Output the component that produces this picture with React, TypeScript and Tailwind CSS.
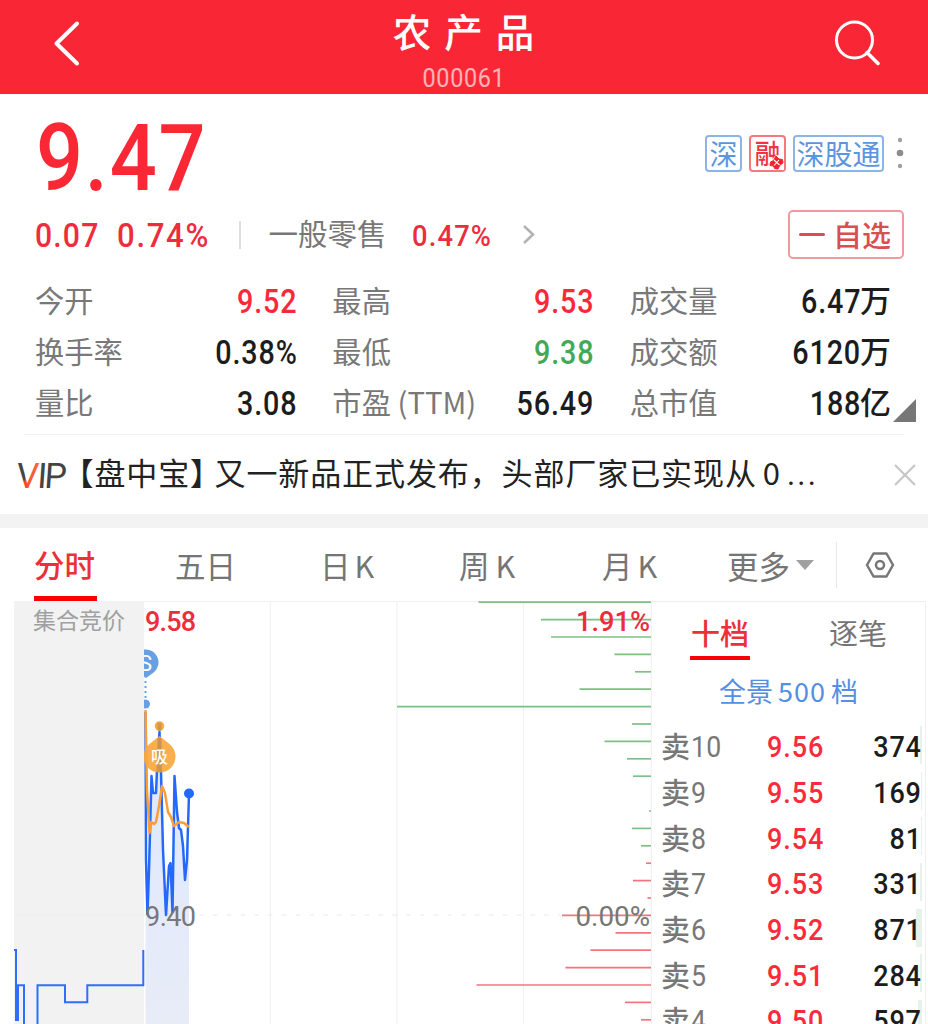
import { clsx } from "clsx";

const stats = [
  { label: "今开", value: "9.52", color: "text-[#fa2838]" },
  { label: "最高", value: "9.53", color: "text-[#fa2838]" },
  { label: "成交量", value: "6.47", unit: "万", color: "text-[#1c1c1c]" },
  { label: "换手率", value: "0.38%", color: "text-[#1c1c1c]" },
  { label: "最低", value: "9.38", color: "text-[#43a957]" },
  { label: "成交额", value: "6120", unit: "万", color: "text-[#1c1c1c]" },
  { label: "量比", value: "3.08", color: "text-[#1c1c1c]" },
  { label: "市盈 (TTM)", value: "56.49", color: "text-[#1c1c1c]" },
  { label: "总市值", value: "188", unit: "亿", color: "text-[#1c1c1c]" },
];

const asks = [
  { level: 10, price: "9.56", volume: 374, depth: 2 },
  { level: 9, price: "9.55", volume: 169, depth: 1 },
  { level: 8, price: "9.54", volume: 81, depth: 1 },
  { level: 7, price: "9.53", volume: 331, depth: 2 },
  { level: 6, price: "9.52", volume: 871, depth: 6 },
  { level: 5, price: "9.51", volume: 284, depth: 2 },
  { level: 4, price: "9.50", volume: 597, depth: 4 },
];

// left edge of each volume-by-price line, top to bottom (651 = no volume)
const upper = [478.5, 541, 551, 614.5, 635, 579.5, 397, 632, 604.5, 627, 633, 651, 649, 632, 641];
const lower = [646, 633, 647.5, 562, 615.5, 590.5, 565.5, 476.5, 625, 641];

const pricePath =
  "M145.5 712 L146 860 L147.5 914 L149 870 L151.5 776 L153 793 L156 793 L157 770 L159.5 732 L161 772 L163 850 L166 915 L169 866 L170.5 863 L172.5 912 L174.5 776 L177 812 L179 828 L181 830 L183 846 L185 880 L187 860 L189 794";

function Header() {
  return (
    <header className="flex h-[94px] shrink-0 items-start justify-between bg-[#f92735] text-white">
      <svg className="ml-[50px] mt-[18px]" width="34" height="52" viewBox="0 0 34 52" fill="none">
        <path d="M27 5.500 L6.500 25.500 L27 45.500" stroke="currentColor" strokeWidth="4" strokeLinecap="round" strokeLinejoin="round" />
      </svg>
      <div className="flex flex-col items-center pl-[11px]">
        <h1 className="mt-[6px] pl-[13px] text-[38.500px] leading-[48px] font-medium tracking-[13px]">农产品</h1>
        <span className="mt-[11px] origin-center scale-x-[0.9] font-[Roboto] text-[26px] leading-[26px] tracking-[0.700px] text-white/65">000061</span>
      </div>
      <svg className="mr-[46px] mt-[18px]" width="50" height="50" viewBox="0 0 50 50" fill="none" stroke="currentColor">
        <circle cx="22.500" cy="22" r="18" strokeWidth="3" />
        <path d="M35 34.500 L46 45.500" strokeWidth="3.500" strokeLinecap="round" />
      </svg>
    </header>
  );
}

function Quote() {
  return (
    <section className="h-[181px] shrink-0">
      <div className="flex h-[116px] items-center justify-between pl-[36px] pr-[24px]">
        <span className="origin-left scale-x-[0.9] pt-[14px] font-[Roboto] text-[92px] leading-none font-medium tracking-[2px] text-[#fa2735]">9.47</span>
        <div className="flex items-center gap-[7px] pt-[2px] text-[28px] leading-[32px] text-[#5b95e0]">
          <span className="flex h-[37px] w-[37px] justify-center rounded-[4px] border-[2px] border-[#8db4ea]">深</span>
          <span className="relative flex h-[37px] w-[37px] justify-center rounded-[4px] border-[2px] border-[#f67780] text-[27px] font-medium text-[#f23344]">
            <span className="scale-x-[0.95]">融</span>
            <svg className="absolute right-0 bottom-0" width="16" height="15" viewBox="0 0 16 15" fill="#f2222f">
              <path d="M8 0 L16 1 V15 H1 V8 Z" fill="white" />
              <path d="M8 1 L11 4 L14.500 4.500 L15 8 L12 10 L10 14 L6.500 13.500 L5.500 11 L2 10.500 L2.500 7 L5.500 5.500 Z" stroke="#f2222f" strokeLinejoin="round" />
              <path d="M6 5 L11.500 10 M11 5 L6 10.500" stroke="white" strokeWidth="1.100" />
            </svg>
          </span>
          <span className="flex h-[37px] w-[91px] justify-center rounded-[4px] border-[2px] border-[#8db4ea]">深股通</span>
          <svg className="ml-[5px]" width="8" height="34" viewBox="0 0 8 34" fill="#a0a0a0">
            <circle cx="4" cy="4" r="2.200" />
            <circle cx="4" cy="17" r="3.300" fill="#8d8d8d" />
            <circle cx="4" cy="30" r="2.200" />
          </svg>
        </div>
      </div>
      <div className="flex h-[49px] items-center pl-[35px] pr-[24px] font-[Roboto] text-[#ee2c3c]">
        <span className="w-[82px] pt-[4px] text-[33.500px] font-medium"><span className="inline-block origin-left scale-x-[0.9] tracking-[1.300px]">0.07</span></span>
        <span className="w-[122px] pt-[4px] text-[33.500px] font-medium"><span className="inline-block origin-left scale-x-[0.93] tracking-[1.800px]">0.74%</span></span>
        <span className="h-[28px] w-[1.500px] bg-[#dedede]" />
        <span className="ml-[28px] w-[143px] pb-[4px] font-['Noto_Sans_CJK_SC'] text-[29.500px] leading-[43px] text-[#777]">一般零售</span>
        <span className="w-[110px] pt-[2px] text-[30px] font-medium"><span className="inline-block origin-left scale-x-[0.91] tracking-[1.300px]">0.47%</span></span>
        <svg width="15" height="22" viewBox="0 0 15 22" fill="none">
          <path d="M2 2 L11 10.500 L2 19" stroke="#b3b3b3" strokeWidth="2.600" />
        </svg>
        <button className="ml-auto flex h-[49px] w-[116px] items-center rounded-[5px] border-[2px] border-[#ef9a9e] pl-[9px] font-['Noto_Sans_CJK_SC'] text-[29px] font-medium text-[#dc4c50]">
          <span className="mr-[8px] h-[3px] w-[26px] rounded-full bg-[#dc4c50]" />
          自选
        </button>
      </div>
    </section>
  );
}

function Stats() {
  return (
    <section className="mx-[24px] h-[160px] shrink-0 border-b border-[#f1f1f1]">
      <div className="relative ml-[11px] grid w-[856px] grid-cols-3 gap-x-[36px]">
        {stats.map((stat) => (
          <div key={stat.label} className="flex h-[51px] items-center justify-between whitespace-nowrap">
            <span className="pb-[3px] text-[29.300px] leading-[47px] text-[#787878]">{stat.label}</span>
            <span className={clsx("flex items-center", stat.color)}>
              <span className="mr-[-1px] origin-right scale-x-[0.87] pt-[2px] font-[Roboto] text-[33px] leading-[48px] font-medium tracking-[1px]">{stat.value}</span>
              {stat.unit && <span className="pb-[3px] text-[31px] leading-[48px] font-medium">{stat.unit}</span>}
            </span>
          </div>
        ))}
        <svg className="absolute right-[-25px] bottom-[6px]" width="24" height="24" viewBox="0 0 24 24">
          <path d="M24 1 V24 H1 Z" fill="#777" />
        </svg>
      </div>
    </section>
  );
}

function News() {
  return (
    <section className="flex h-[79px] shrink-0 items-center pl-[15px] pr-[10px]">
      <svg width="54" height="50" viewBox="0 -5 54 50" className="shrink-0">
        <defs>
          <linearGradient id="vip" x1="0" x2="1" y1="0" y2="0.2">
            <stop offset="0.470" stopColor="#444" />
            <stop offset="0.480" stopColor="#f0442c" />
            <stop offset="1" stopColor="#fa7040" />
          </linearGradient>
        </defs>
        <g fontFamily="Roboto" fontSize="35" transform="skewX(-4)">
          <text x="3" y="33" fill="url(#vip)">V</text>
          <text x="24" y="33" fill="#444">I</text>
          <text x="31" y="33" fill="#444">P</text>
        </g>
      </svg>
      <p className="ml-[9px] flex items-baseline whitespace-nowrap pb-[3px] text-[31px] leading-[48px] tracking-[0.9px] text-[#222]">
        <span className="[font-feature-settings:'halt']">【</span>
        <span>盘中宝</span>
        <span className="mr-[8px] [font-feature-settings:'halt']">】</span>
        <span>又一新品正式发布，头部厂家已实现从</span>
        <span className="ml-[6px]">0</span>
        <span className="ml-[6px] font-[Roboto] tracking-[2.200px]">...</span>
      </p>
      <svg className="ml-auto" width="26" height="26" viewBox="0 0 26 26" stroke="#c6c6c6" strokeWidth="2.200">
        <path d="M3 3 L23 23 M23 3 L3 23" />
      </svg>
    </section>
  );
}

function Tabs() {
  return (
    <nav className="flex h-[73px] shrink-0 items-center pl-[34px] text-[30.500px] leading-[70px] text-[#757575]">
      <span className="flex h-[72px] w-[141px]">
        <span className="w-[63px] border-b-[5px] border-[#fb0007] font-medium text-[#ec3038]">分时</span>
      </span>
      <span className="w-[145px]">五日</span>
      <span className="w-[139px]">日<span className="ml-[4px]">K</span></span>
      <span className="w-[143px]">周<span className="ml-[6px]">K</span></span>
      <span className="w-[125px]">月<span className="ml-[5px]">K</span></span>
      <span className="flex w-[109px] items-center gap-[6px] text-[31.500px]">
        更多
        <svg width="18" height="10" viewBox="0 0 18 10"><path d="M0 0 H18 L9 10 Z" fill="#a0a0a0" /></svg>
      </span>
      <span className="h-[46px] w-px bg-[#e8e8e8]" />
      <svg className="ml-[28px]" width="30" height="28" viewBox="0 0 30 28" fill="none" stroke="#777" strokeWidth="2.500">
        <path d="M8.500 2.500 H21.500 L28 14 L21.500 25.500 H8.500 L2 14 Z" strokeLinejoin="round" />
        <circle cx="15" cy="14" r="4" />
      </svg>
    </nav>
  );
}

function Chart() {
  return (
    <svg className="ml-[14px] shrink-0" width="638" height="423" viewBox="14 601 638 423" fill="none" fontFamily="Roboto">
      <defs>
        <linearGradient id="area" x1="0" x2="0" y1="0" y2="1">
          <stop offset="0" stopColor="#dce7ff" />
          <stop offset="1" stopColor="#e8ecf7" />
        </linearGradient>
        <clipPath id="session">
          <rect x="144" y="601" width="508" height="423" />
        </clipPath>
      </defs>
      <rect x="14" y="601" width="130" height="423" fill="#f2f2f2" />
      <path d="M14 601.500 H652 M270.300 601 V1024 M397 601 V1024 M523.500 601 V1024 M651.300 601 V1024" stroke="#f1f1f1" strokeWidth="1.200" />
      <path d={`${pricePath} V1024 H145.500 Z`} fill="url(#area)" />
      <path d="M14 915 H144" stroke="#ededed" />
      <path d="M144 915 H560" stroke="#e9e9e9" strokeDasharray="4.500 9.300" />

      {upper.map((x, i) => (
        <path key={i} d={`M${x} ${602.2 + i * 17.4} H651`} stroke="#7cc085" strokeWidth="1.700" />
      ))}
      {lower.map((x, i) => (
        <path key={i} d={`M${x} ${863.2 + i * 17.4} H651`} stroke="#f5737e" strokeWidth="1.700" />
      ))}

      <path d="M14 950 H16 V1020 H18 V985.300 H24 V1026 M37.500 1026 V985.300 H65 V1002.300 H87.300 V985.300 H143.300 V950" stroke="#2c70fa" strokeWidth="2" />
      <g clipPath="url(#session)" strokeLinejoin="round">
        <path d={pricePath} stroke="#2469fb" strokeWidth="2.500" />
        <path d="M145.500 710 L147 790 L149.500 833 L151 822 L154 824 L156 822 L159 806 L162 786 L165 793 L168 812 L171 817 L174 826 L179 822 L184 823 L189 827" stroke="#fb9e35" strokeWidth="2.500" />
        <circle cx="189" cy="793.500" r="5" fill="#2469fb" />
        <path d="M146 678 L138 673 A13 13 0 1 1 153 673 Z" fill="#69a0e5" />
        <text x="139" y="670.500" fill="white" fontSize="22">S</text>
        <path d="M145.500 681 V700" stroke="#69a0e5" strokeWidth="2" strokeDasharray="2 3" />
        <circle cx="145.500" cy="704" r="4.500" fill="#69a0e5" />
        <circle cx="159.500" cy="726" r="4.700" fill="#f8a843" />
        <path d="M159.500 736 L169.500 744 A16 16 0 1 1 149.500 744 Z" fill="#faa63c" fillOpacity="0.900" />
        <path d="M159.500 723 V731 M159.500 738 V772" stroke="#bb8b50" strokeWidth="4" strokeOpacity="0.600" />
        <text x="151" y="763" fill="white" fontSize="17" fontWeight="500" fontFamily="Noto Sans CJK SC, sans-serif">吸</text>
      </g>

      <text x="33" y="628.500" fill="#a0a0a0" fontSize="23" fontFamily="Noto Sans CJK SC, sans-serif">集合竞价</text>
      <text x="145" y="631" fill="#ed2c3c" fontSize="27" fontWeight="500" textLength="51">9.58</text>
      <text x="576" y="631" fill="#ed2c3c" fontSize="27" fontWeight="500" textLength="74" lengthAdjust="spacingAndGlyphs">1.91%</text>
      <text x="145" y="925.500" fill="#777" fontSize="27" textLength="51">9.40</text>
      <text x="575.500" y="925.500" fill="#777" fontSize="27" textLength="74.500" lengthAdjust="spacingAndGlyphs">0.00%</text>
    </svg>
  );
}

function OrderBook() {
  return (
    <aside className="w-[274px] border-t border-r-[1.500px] border-[#efefef]">
      <div className="flex h-[58px] text-[29px] leading-[60px] text-[#757575]">
        <span className="ml-[38px] w-[60px] border-b-[4px] border-[#fb0007] text-center font-medium text-[#ec3038]">十档</span>
        <span className="ml-[79px]">逐笔</span>
      </div>
      <div className="flex h-[63px] justify-center gap-[5px] text-[27px] leading-[61px] text-[#548fe3]">
        <span>全景</span>
        <span className="tracking-[1px]">500</span>
        <span>档</span>
      </div>
      {asks.map((ask) => (
        <div key={ask.level} className="relative flex h-[45.700px] items-center pl-[9px] font-[Roboto] text-[30px] leading-[45px]">
          <span className="absolute top-[3px] right-[3px] h-[38px] bg-[#e7f2eb]" style={{ width: ask.depth }} />
          <span className="flex w-[106px] items-center text-[#777]">
            <span className="font-['Noto_Sans_CJK_SC'] text-[29px] leading-[45px] font-medium">卖</span>
            <span className="origin-left scale-x-[0.89] pl-px pt-[2px] tracking-[0.500px]">{ask.level}</span>
          </span>
          <span className="origin-left scale-x-[0.9] pt-[2px] font-medium tracking-[1px] text-[#fa2b3b]">{ask.price}</span>
          <span className="relative ml-auto mr-[3px] origin-right scale-x-[0.9] pt-[2px] font-medium tracking-[0.800px] text-[#1c1c1c]">{ask.volume}</span>
        </div>
      ))}
    </aside>
  );
}

export default function App() {
  return (
    <main className="flex h-[1024px] w-[928px] flex-col overflow-hidden bg-white font-['Noto_Sans_CJK_SC',sans-serif]">
      <Header />
      <Quote />
      <Stats />
      <News />
      <div className="h-[14px] shrink-0 bg-[#f3f3f3]" />
      <Tabs />
      <div className="flex h-[423px] shrink-0 overflow-hidden">
        <Chart />
        <OrderBook />
      </div>
    </main>
  );
}
